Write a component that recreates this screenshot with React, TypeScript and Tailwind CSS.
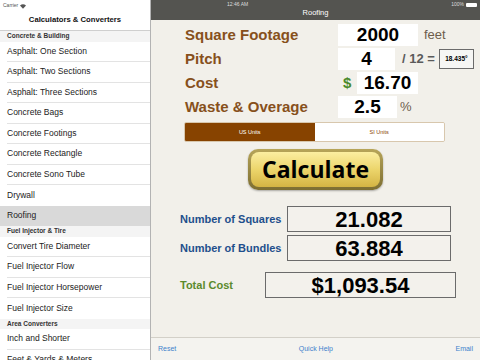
import React from 'react';

type Item = { kind: 'section' | 'row'; label: string; selected?: boolean };

const items: Item[] = [
  { kind: 'section', label: 'Concrete & Building' },
  { kind: 'row', label: 'Asphalt: One Section' },
  { kind: 'row', label: 'Asphalt: Two Sections' },
  { kind: 'row', label: 'Asphalt: Three Sections' },
  { kind: 'row', label: 'Concrete Bags' },
  { kind: 'row', label: 'Concrete Footings' },
  { kind: 'row', label: 'Concrete Rectangle' },
  { kind: 'row', label: 'Concrete Sono Tube' },
  { kind: 'row', label: 'Drywall' },
  { kind: 'row', label: 'Roofing', selected: true },
  { kind: 'section', label: 'Fuel Injector & Tire' },
  { kind: 'row', label: 'Convert Tire Diameter' },
  { kind: 'row', label: 'Fuel Injector Flow' },
  { kind: 'row', label: 'Fuel Injector Horsepower' },
  { kind: 'row', label: 'Fuel Injector Size' },
  { kind: 'section', label: 'Area Converters' },
  { kind: 'row', label: 'Inch and Shorter' },
  { kind: 'row', label: 'Feet & Yards & Meters' },
];

const Wifi = () => (
  <svg width="6" height="5" viewBox="0 0 12 9" className="ml-[2px]">
    <path d="M6 9 L0 2.5 A9 9 0 0 1 12 2.5 Z" fill="#555" />
  </svg>
);

const Sidebar: React.FC = () => (
  <div className="w-[151px] shrink-0 border-r border-[#b3b3b3] bg-white flex flex-col overflow-hidden">
    <div className="h-[12px] shrink-0 flex items-center pl-[3px] text-[5px] text-[#555]">
      Carrier
      <Wifi />
    </div>
    <div className="h-[19px] shrink-0 flex items-center justify-center pb-[3px] border-b border-[#cfcfcf] text-[7.7px] font-bold text-[#111]">
      Calculators &amp; Converters
    </div>
    {items.map((it, i) =>
      it.kind === 'section' ? (
        <div key={i} className="h-[10.5px] shrink-0 bg-[#f4f4f4] flex items-center px-[7px] text-[6.5px] font-bold text-[#333]">
          {it.label}
        </div>
      ) : (
        <div
          key={i}
          className={`h-[20.5px] shrink-0 flex items-center pl-[7px] text-[8.5px] text-[#222] ${it.selected ? 'bg-[#d9d9d9]' : ''}`}
        >
          <div className={`h-full w-full flex items-center ${items[i + 1]?.kind === 'row' && !it.selected && !items[i + 1]?.selected ? 'border-b border-[#e3e3e3]' : ''}`}>
            {it.label}
          </div>
        </div>
      )
    )}
  </div>
);

const Label: React.FC<{ children: React.ReactNode }> = ({ children }) => (
  <div className="w-[153px] shrink-0 text-[15px] font-bold text-[#87501c]">{children}</div>
);

const InputBox: React.FC<{ w: string; children: React.ReactNode }> = ({ w, children }) => (
  <div className={`${w} h-[22px] bg-white flex items-center justify-center text-[19px] font-bold text-black`}>
    {children}
  </div>
);

const ResultBox: React.FC<{ w: string; children: React.ReactNode }> = ({ w, children }) => (
  <div className={`${w} h-[26px] border border-[#6b6b6b] bg-[#f3f1ec] flex items-center justify-center text-[22px] font-bold text-black`}>
    {children}
  </div>
);

export default function App() {
  return (
    <div
      className="w-[480px] h-[360px] flex overflow-hidden bg-white"
      style={{ fontFamily: '"Liberation Sans", Arial, sans-serif' }}
    >
      <Sidebar />
      <div className="flex-1 flex flex-col bg-[#f2f0ea]">
        {/* nav bar */}
        <div className="h-[20px] shrink-0 bg-[#545450] flex flex-col text-white">
          <div className="h-[9px] flex items-center pl-[76px] pr-[3px] text-[5px] text-[#ddd]">
            <span>12:46 AM</span>
            <span className="ml-auto">100%</span>
            <span className="ml-[2px] w-[11px] h-[4px] bg-white rounded-[1px]" />
          </div>
          <div className="flex-1 flex items-start justify-center text-[7.5px] leading-none">Roofing</div>
        </div>

        {/* inputs */}
        <div className="flex flex-col gap-[2px] pt-[4px] pl-[34px]">
          <div className="h-[22px] flex items-center">
            <Label>Square Footage</Label>
            <InputBox w="w-[80px]">2000</InputBox>
            <span className="ml-[6px] text-[13px] text-[#6d5d4c]">feet</span>
          </div>
          <div className="h-[22px] flex items-center">
            <Label>Pitch</Label>
            <InputBox w="w-[57px]">4</InputBox>
            <span className="ml-[7px] text-[13px] font-bold text-[#5a5a5a] whitespace-pre">/ 12 =</span>
            <div className="ml-[4px] w-[35px] h-[20px] border border-[#6b6b6b] bg-[#f6f6f4] flex items-center justify-center text-[6.5px] font-bold text-black">
              18.435°
            </div>
          </div>
          <div className="h-[22px] flex items-center">
            <Label>Cost</Label>
            <span className="w-[19px] pl-[5px] text-[15px] font-bold text-[#4a8a2a]">$</span>
            <InputBox w="w-[61px]">16.70</InputBox>
          </div>
          <div className="h-[22px] flex items-center">
            <Label>Waste &amp; Overage</Label>
            <InputBox w="w-[59px]">2.5</InputBox>
            <span className="ml-[3px] text-[13px] text-[#6d5d4c]">%</span>
          </div>
        </div>

        {/* units segmented control */}
        <div className="ml-[33px] mt-[4px] w-[261px] h-[20px] flex rounded-[2px] border border-[#d8c7ad] overflow-hidden text-[5.5px]">
          <div className="flex-1 bg-[#874300] text-white flex items-center justify-center">US Units</div>
          <div className="flex-1 bg-white text-[#874300] flex items-center justify-center">SI Units</div>
        </div>

        {/* calculate */}
        <div className="flex justify-center mt-[7px]">
          <div className="w-[135px] h-[41px] rounded-[10px] bg-gradient-to-b from-[#b7a559] to-[#7d6e32] p-[3px] shadow-[0_1px_2px_rgba(0,0,0,0.3)]">
            <div
              className="w-full h-full rounded-[8px] bg-gradient-to-b from-[#fbeea0] via-[#ecd56b] to-[#d4b443] flex items-center justify-center text-[23px] font-bold text-black"
              style={{ fontFamily: '"Open Sans", "Liberation Sans", sans-serif' }}
            >
              Calculate
            </div>
          </div>
        </div>

        {/* results */}
        <div className="mt-[16px] pl-[29px] flex flex-col gap-[3px]">
          <div className="flex items-center">
            <span className="w-[107px] text-[11px] font-bold text-[#1e4f8c]">Number of Squares</span>
            <ResultBox w="w-[164px]">21.082</ResultBox>
          </div>
          <div className="flex items-center">
            <span className="w-[107px] text-[11px] font-bold text-[#1e4f8c]">Number of Bundles</span>
            <ResultBox w="w-[164px]">63.884</ResultBox>
          </div>
          <div className="flex items-center mt-[8px]">
            <span className="w-[85px] text-[11px] font-bold text-[#5b8a2c]">Total Cost</span>
            <ResultBox w="w-[191px]">$1,093.54</ResultBox>
          </div>
        </div>

        <div className="flex-1" />

        {/* bottom toolbar */}
        <div className="h-[23px] shrink-0 border-t border-[#d3d0c8] bg-[#f4f3ef] flex items-center justify-between px-[7px] text-[7px] text-[#3f82cc]">
          <span>Reset</span>
          <span>Quick Help</span>
          <span>Email</span>
        </div>
      </div>
    </div>
  );
}
